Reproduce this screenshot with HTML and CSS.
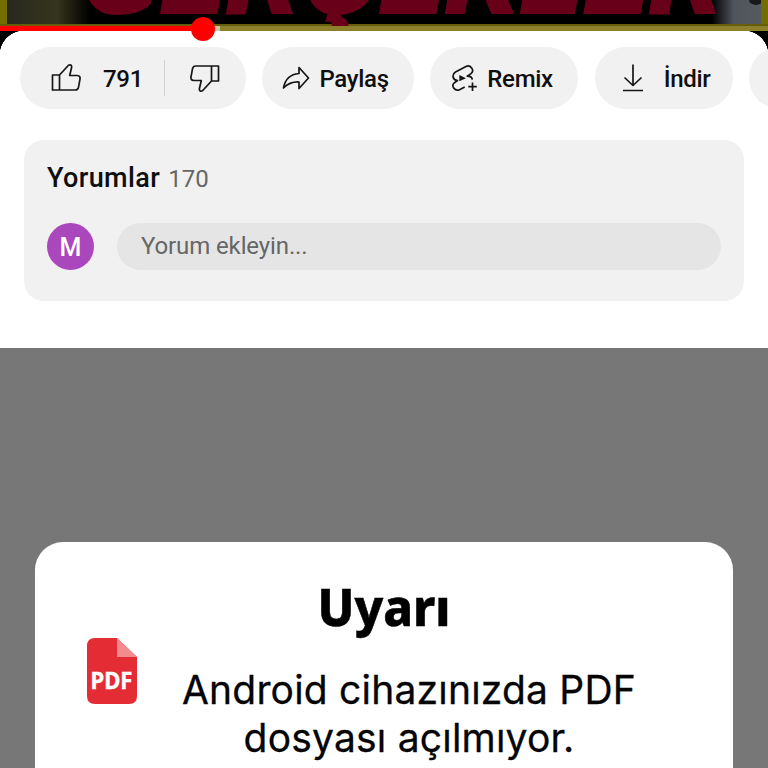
FILE: index.html
```html
<!DOCTYPE html>
<html lang="tr">
<head>
<meta charset="utf-8">
<title>Video</title>
<link rel="stylesheet" href="styles.css">
</head>
<body>
<main class="screen">
  <header class="video">
    <svg class="thumbnail" width="768" height="31" viewBox="0 0 768 31">
      <defs>
        <linearGradient id="left"><stop stop-color="#28281f"/><stop offset=".6" stop-color="#36351d"/><stop offset="1" stop-color="#000"/></linearGradient>
        <linearGradient id="right"><stop stop-color="#000"/><stop offset=".45" stop-color="#50555c"/><stop offset="1" stop-color="#555a61"/></linearGradient>
      </defs>
      <rect width="768" height="31" fill="#000"/>
      <rect x="7" width="83" height="24" fill="url(#left)"/>
      <rect x="712" width="49" height="24" fill="url(#right)"/>
      <ellipse cx="756" cy="0" rx="7" ry="5" fill="#18191c"/>
      <rect width="7" height="26" fill="#746e00"/>
      <rect x="761" width="7" height="26" fill="#746e00"/>
      <rect y="24" width="768" height="3" fill="#655d0a"/>
      <text class="headline" x="80" y="14" textLength="645" lengthAdjust="spacingAndGlyphs">GERÇEKLER</text>
      <rect y="26" width="768" height="5" fill="#8b812b"/>
      <rect x="203" y="26" width="17" height="5" fill="#cbc6a0"/>
      <rect y="26" width="203" height="5" fill="#f00"/>
    </svg>
    <span class="playhead"></span>
  </header>
  <section class="sheet">
    <nav class="actions">
      <div class="pill rate">
        <svg class="ic" width="32" height="32" viewBox="0 0 32 32"><path d="M2.500 13h7v15h-7zM9.500 13L18.500 3.200q3-1.200 3.200 1.800l-2 8.500h7.500q3.500.4 2.800 3.700l-1.500 8q-.7 2.800-3 2.800H9.500"/></svg>
        <span class="count">791</span>
        <span class="divider"></span>
        <svg class="ic" width="32" height="32" viewBox="0 0 32 32"><path transform="rotate(180 16 16)" d="M2.500 13h7v15h-7zM9.500 13L18.500 3.200q3-1.200 3.200 1.800l-2 8.500h7.500q3.500.4 2.800 3.700l-1.500 8q-.7 2.800-3 2.800H9.500"/></svg>
      </div>
      <div class="pill share">
        <svg class="ic" width="28" height="26" viewBox="0 0 28 26"><path d="M17 2.500L26.500 13L17 23.500v-6.500Q8 16.500 1.500 23Q4 9.500 17 8.500z"/></svg>
        <span>Paylaş</span>
      </div>
      <div class="pill remix">
        <svg class="ic" width="28" height="28" viewBox="0 0 28 28"><path d="M13.700 23L8.500 25.700C4 27.500-.5 22 3.500 18.700L6.500 16.500C1.500 16 .5 10.500 4.500 8L14.500 2.700C19.500 0 24 6.300 20 9.600L16.300 12.200Q21 12.300 21.300 15.600M21.500 18.500v8.500M17.300 22.700h8.500"/><path class="solid" d="M8.300 11l6.700 3.200-6.700 3.100z"/></svg>
        <span>Remix</span>
      </div>
      <div class="pill download">
        <svg class="ic" width="24" height="30" viewBox="0 0 24 30"><path d="M12 1.500v21M3.500 14.500l8.500 8 8.500-8M2 27.500h20"/></svg>
        <span>İndir</span>
      </div>
      <div class="pill more"></div>
    </nav>
    <section class="comments">
      <h2>Yorumlar <span>170</span></h2>
      <div class="compose">
        <span class="avatar">M</span>
        <div class="field">Yorum ekleyin...</div>
      </div>
    </section>
  </section>
  <section class="backdrop">
    <article class="dialog">
      <h1>Uyarı</h1>
      <div class="message">
        <svg class="pdf" width="50" height="66" viewBox="0 0 50 66"><path fill="#e32c34" d="M8 0H30L50 19V58q0 8-8 8H8q-8 0-8-8V8Q0 0 8 0z"/><path fill="#f18b90" d="M30 0L50 19H30z"/><text x="3.500" y="51" textLength="42" lengthAdjust="spacingAndGlyphs">PDF</text></svg>
        <p>Android cihazınızda PDF<br>dosyası açılmıyor.</p>
      </div>
    </article>
  </section>
</main>
</body>
</html>
```
FILE: styles.css
```css
* { box-sizing: border-box; }
body { margin: 0; font-family: Roboto, sans-serif; background: #fff; }
.screen { width: 768px; height: 768px; overflow: hidden; display: flex; flex-direction: column; }
.video { height: 31px; flex: none; position: relative; z-index: 1; background: #000; }
.thumbnail { display: block; overflow: hidden; }
.headline { font: italic 900 112px Roboto, sans-serif; fill: #69001a; }
.playhead { position: absolute; left: 191px; top: 17px; width: 24px; height: 24px; border-radius: 50%; background: #f00; }
.sheet { height: 317px; flex: none; background: radial-gradient(circle at 24px 24px, #fff 24px, #000 24.5px) 0 0 / 24px 24px no-repeat, radial-gradient(circle at 0 24px, #fff 24px, #000 24.5px) 100% 0 / 24px 24px no-repeat, #fff; padding-top: 16px; }
.actions { display: flex; gap: 16.4px; padding-left: 20px; overflow: hidden; }
.pill { height: 62px; flex: none; border-radius: 31px; background: #f1f1f1; display: flex; align-items: center; font-size: 24px; font-weight: 500; color: #0f0f0f; }
.pill span:not(.divider) { position: relative; top: 1px; letter-spacing: -.3px; }
.ic { flex: none; fill: none; stroke: #161616; stroke-width: 1.7; stroke-linejoin: round; }
.solid { fill: #161616; stroke: none; }
.rate { width: 226px; padding-left: 30px; }
.pill .count { margin-left: 21px; width: 61px; letter-spacing: -.2px; }
.divider { width: 1px; height: 36px; background: #d2d2d2; margin-right: 24px; }
.share { width: 151.500px; padding-left: 20px; gap: 9px; }
.remix { width: 148px; padding-left: 21px; gap: 8px; }
.download { width: 138px; padding-left: 26px; gap: 19px; }
.more { width: 62px; }
.comments { margin: 31px 24px 0; height: 161px; border-radius: 20px; background: #f1f1f1; padding: 20px 23px; }
h2 { margin: 0; font-size: 27px; line-height: 36px; font-weight: 500; color: #0f0f0f; letter-spacing: .4px; }
h2 span { font-weight: 400; font-size: 24px; color: #666; margin-left: 1px; letter-spacing: 0; }
.compose { display: flex; gap: 23px; margin-top: 26px; }
.avatar { width: 47px; height: 47px; border-radius: 50%; background: #ab47bc; color: #fff; font-size: 25px; font-weight: 500; line-height: 49px; text-align: center; }
.field { flex: 1; height: 47px; border-radius: 24px; background: #e5e5e5; color: #666; font-size: 24px; line-height: 47px; padding-left: 24px; letter-spacing: -.12px; }
.backdrop { flex: 1; background: #777; padding: 194px 35px 0; }
.dialog { height: 260px; width: 698px; background: #fff; border-radius: 28px; padding-top: 33px; }
h1 { margin: 0 0 1px; text-align: center; font: 800 52px/62px "Noto Sans", sans-serif; color: #000; transform: scaleX(.94); -webkit-text-stroke: .5px #000; }
.message { display: flex; padding-left: 52px; }
.pdf { flex: none; }
.pdf text { font: 700 23px "Noto Sans", sans-serif; fill: #fff; stroke: #fff; stroke-width: .4px; }
p { margin: 28px 0 0; width: 544px; text-align: center; font: 400 39px/48px Inter, sans-serif; color: #050505; letter-spacing: .2px; -webkit-text-stroke: .3px #050505; }
```
